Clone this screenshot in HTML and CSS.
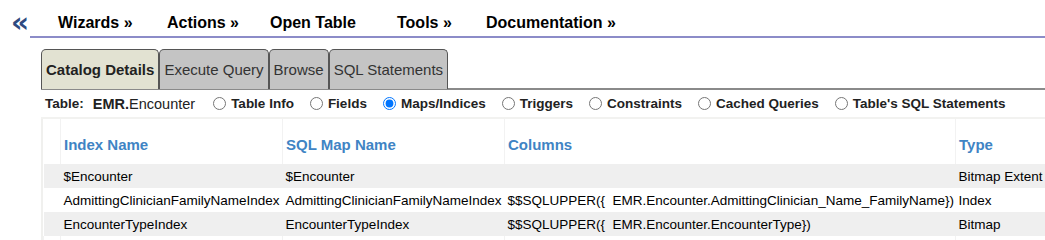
FILE: index.html
```html
<!DOCTYPE html>
<html lang="en">
  <head>
    <meta charset="UTF-8" />
    <title>Catalog Details</title>
    <link rel="stylesheet" href="styles.css">
  </head>
  <body>
    <div class="topbar">
      <span class="collapse">&laquo;</span>
      <ul class="menu">
        <li class="m-wizards">Wizards &raquo;</li>
        <li class="m-actions">Actions &raquo;</li>
        <li class="m-open">Open Table</li>
        <li class="m-tools">Tools &raquo;</li>
        <li>Documentation &raquo;</li>
      </ul>
    </div>

    <div class="content">
      <div class="tabs">
        <div class="tab active">Catalog Details</div>
        <div class="tab">Execute Query</div>
        <div class="tab">Browse</div>
        <div class="tab">SQL Statements</div>
      </div>

      <div class="options">
        <span class="tlabel">Table:</span>
        <span class="tname"><b>EMR.</b>Encounter</span>
        <label><input type="radio" name="view" /> Table Info</label>
        <label><input type="radio" name="view" /> Fields</label>
        <label><input type="radio" name="view" checked /> Maps/Indices</label>
        <label><input type="radio" name="view" /> Triggers</label>
        <label><input type="radio" name="view" /> Constraints</label>
        <label><input type="radio" name="view" /> Cached Queries</label>
        <label><input type="radio" name="view" /> Table's SQL Statements</label>
      </div>

      <div class="panel">
        <table class="grid">
          <thead>
            <tr>
              <th class="gutter"></th>
              <th class="c-name">Index Name</th>
              <th class="c-map">SQL Map Name</th>
              <th class="c-cols">Columns</th>
              <th class="c-type">Type</th>
            </tr>
          </thead>
          <tbody>
            <tr class="odd">
              <td class="gutter"></td>
              <td>$Encounter</td>
              <td>$Encounter</td>
              <td></td>
              <td>Bitmap Extent</td>
            </tr>
            <tr>
              <td class="gutter"></td>
              <td>AdmittingClinicianFamilyNameIndex</td>
              <td>AdmittingClinicianFamilyNameIndex</td>
              <td>$$SQLUPPER({&nbsp; EMR.Encounter.AdmittingClinician_Name_FamilyName})</td>
              <td>Index</td>
            </tr>
            <tr class="odd">
              <td class="gutter"></td>
              <td>EncounterTypeIndex</td>
              <td>EncounterTypeIndex</td>
              <td>$$SQLUPPER({&nbsp; EMR.Encounter.EncounterType})</td>
              <td>Bitmap</td>
            </tr>
            <tr class="spacer">
              <td class="gutter"></td>
              <td></td>
              <td></td>
              <td></td>
              <td></td>
            </tr>
          </tbody>
        </table>
      </div>
    </div>
  </body>
</html>
```

FILE: styles.css
```css
body {
  font-family: "Liberation Sans", Arial, sans-serif;
  margin: 0;
  background-color: #ffffff;
  color: #000000;
  overflow: hidden;
}
.topbar {
  display: flex;
  align-items: flex-end;
  height: 38px;
  padding-left: 11px;
}
.collapse {
  width: 19px;
  font-family: "DejaVu Sans", sans-serif;
  font-weight: bold;
  font-size: 28px;
  line-height: 24px;
  color: #2e4a80;
  margin-bottom: 3px;
}
.menu {
  flex: 1;
  display: flex;
  list-style: none;
  margin: 0;
  padding: 0 0 4px 28px;
  border-bottom: 2px solid #8c8cc8;
  font-weight: bold;
  font-size: 16px;
}
.menu li {
  white-space: nowrap;
}
.m-wizards {
  width: 109px;
}
.m-actions {
  width: 103px;
}
.m-open {
  width: 127px;
}
.m-tools {
  width: 89px;
}
.content {
  padding-left: 41px;
}
.tabs {
  display: flex;
  margin-top: 11px;
  border-bottom: 2px solid #8a8a8a;
  height: 39px;
  align-items: flex-end;
}
.tab {
  box-sizing: border-box;
  height: 40px;
  margin-bottom: -1px;
  padding: 11px 4px 0;
  font-size: 15px;
  background-color: #c4c4c4;
  color: #333333;
  border: 1px solid #555555;
  border-bottom: none;
  border-radius: 5px 5px 0 0;
  white-space: nowrap;
}
.tab.active {
  background-color: #e2e2d2;
  color: #222222;
  font-weight: bold;
}
.options {
  display: flex;
  align-items: center;
  height: 27px;
  padding-left: 4px;
  font-size: 13.5px;
  font-weight: bold;
  color: #222222;
  border-bottom: 2px solid #f2f2f0;
}
.tlabel {
  margin-right: 9px;
}
.tname {
  font-size: 14.5px;
  font-weight: normal;
  margin-right: 18px;
}
.options label {
  display: flex;
  align-items: center;
  margin-right: 16px;
  white-space: nowrap;
}
.options input {
  margin: 0 5px 0 0;
  width: 13px;
  height: 13px;
}
.panel {
  border-left: 2px solid #f0f0ee;
}
.grid {
  border-collapse: collapse;
  table-layout: fixed;
  width: 1058px;
  font-size: 13.5px;
  white-space: nowrap;
}
.grid th {
  height: 45px;
  padding: 5px 3px 0;
  box-sizing: border-box;
  text-align: left;
  font-size: 15px;
  color: #3f84c4;
  border-left: 1px solid #f2f2f2;
}
.grid td {
  height: 24px;
  padding: 0 3px;
  overflow: hidden;
}
.grid tr.spacer td {
  border-left: 1px solid #f2f2f2;
}
.grid .gutter {
  width: 17px;
  border-left: none;
}
.c-name {
  width: 222px;
}
.c-map {
  width: 222px;
}
.c-cols {
  width: 451px;
}
.c-type {
  width: 146px;
}
.grid tr.odd td {
  background-color: #efefef;
}
.grid tr.spacer td {
  height: 10px;
}
```
